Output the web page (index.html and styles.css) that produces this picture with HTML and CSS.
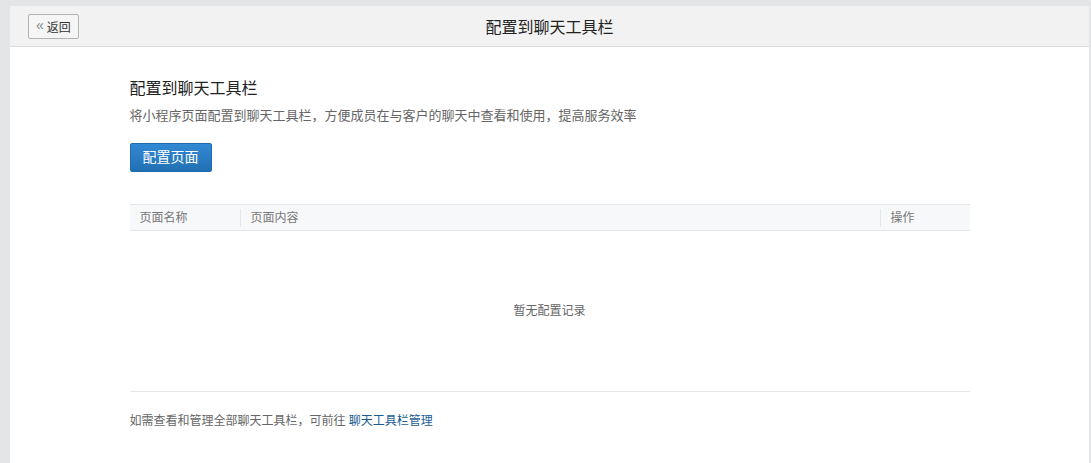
FILE: index.html
```html
<!DOCTYPE html>
<html>
	<head>
		<meta charset="UTF-8">
		<title>配置到聊天工具栏</title>
		<link rel="stylesheet" href="styles.css">
	</head>
	<body>
		<div class="panel">
			<div class="head">
				<a class="back" href="#"><span class="arr">&laquo;</span>返回</a>
				<h1 class="head-title">配置到聊天工具栏</h1>
			</div>
			<div class="main">
				<h2 class="title">配置到聊天工具栏</h2>
				<p class="desc">将小程序页面配置到聊天工具栏，方便成员在与客户的聊天中查看和使用，提高服务效率</p>
				<a class="btn" href="#">配置页面</a>
				<div class="table">
					<div class="thead">
						<div class="th name">页面名称</div>
						<div class="th content">页面内容</div>
						<div class="th op">操作</div>
					</div>
					<div class="empty">暂无配置记录</div>
				</div>
				<p class="foot">如需查看和管理全部聊天工具栏，可前往 <a href="#">聊天工具栏管理</a></p>
			</div>
		</div>
	</body>
</html>
```

FILE: styles.css
```css
html,
body {
	margin: 0;
	padding: 0;
	height: 100%;
}

body {
	background: #e4e5e7;
	font-family: "Liberation Sans", "Noto Sans CJK SC", sans-serif;
	color: #333;
	padding: 6px 2px 0 10px;
	box-sizing: border-box;
}

.panel {
	background: #fff;
	min-height: 100%;
}

.head {
	height: 40px;
	background: #f2f2f2;
	border-bottom: 1px solid #d9dde0;
	display: flex;
	align-items: center;
	position: relative;
	padding-left: 18px;
}

.back {
	display: flex;
	align-items: center;
	height: 23px;
	padding: 0 7px 0 7px;
	border: 1px solid #b3b3b3;
	border-radius: 2px;
	background: #f5f5f5;
	color: #333;
	font-size: 12px;
	text-decoration: none;
}

.arr {
	font-size: 14px;
	color: #888;
	margin-right: 3px;
	position: relative;
	top: -1px;
	font-weight: lighter;
}

.head-title {
	position: absolute;
	left: 0;
	right: 0;
	text-align: center;
	margin: 0;
	font-size: 16px;
	font-weight: normal;
	color: #222;
	pointer-events: none;
}

.main {
	width: 840px;
	margin: 0 auto;
	padding-top: 30px;
}

.title {
	margin: 0;
	font-size: 16px;
	font-weight: normal;
	color: #222;
	line-height: 24px;
}

.desc {
	margin: 6px 0 0;
	font-size: 13px;
	line-height: 18px;
	color: #666;
}

.btn {
	display: inline-block;
	margin-top: 18px;
	width: 82px;
	height: 29px;
	line-height: 27px;
	text-align: center;
	font-size: 14px;
	color: #fff;
	text-decoration: none;
	border-radius: 2px;
	background: linear-gradient(#3289d4, #2270b3);
	box-sizing: border-box;
	border: 1px solid #1f6bab;
}

.table {
	margin-top: 32px;
	border-bottom: 1px solid #e4e6e9;
}

.thead {
	display: flex;
	height: 25px;
	align-items: center;
	background: #f7f8fa;
	border-top: 1px solid #e6e8eb;
	border-bottom: 1px solid #e4e6e9;
	font-size: 12px;
	color: #777;
}

.th {
	padding-left: 10px;
	box-sizing: border-box;
	line-height: 18px;
}

.name {
	width: 110px;
}

.content {
	flex: 1;
	border-left: 1px solid #e6e6e6;
}

.op {
	width: 90px;
	border-left: 1px solid #e6e6e6;
}

.empty {
	height: 160px;
	line-height: 160px;
	text-align: center;
	font-size: 12px;
	color: #666;
}

.foot {
	margin: 20px 0 0;
	font-size: 12px;
	line-height: 18px;
	color: #666;
}

.foot a {
	color: #1a5c92;
	text-decoration: none;
}
```
